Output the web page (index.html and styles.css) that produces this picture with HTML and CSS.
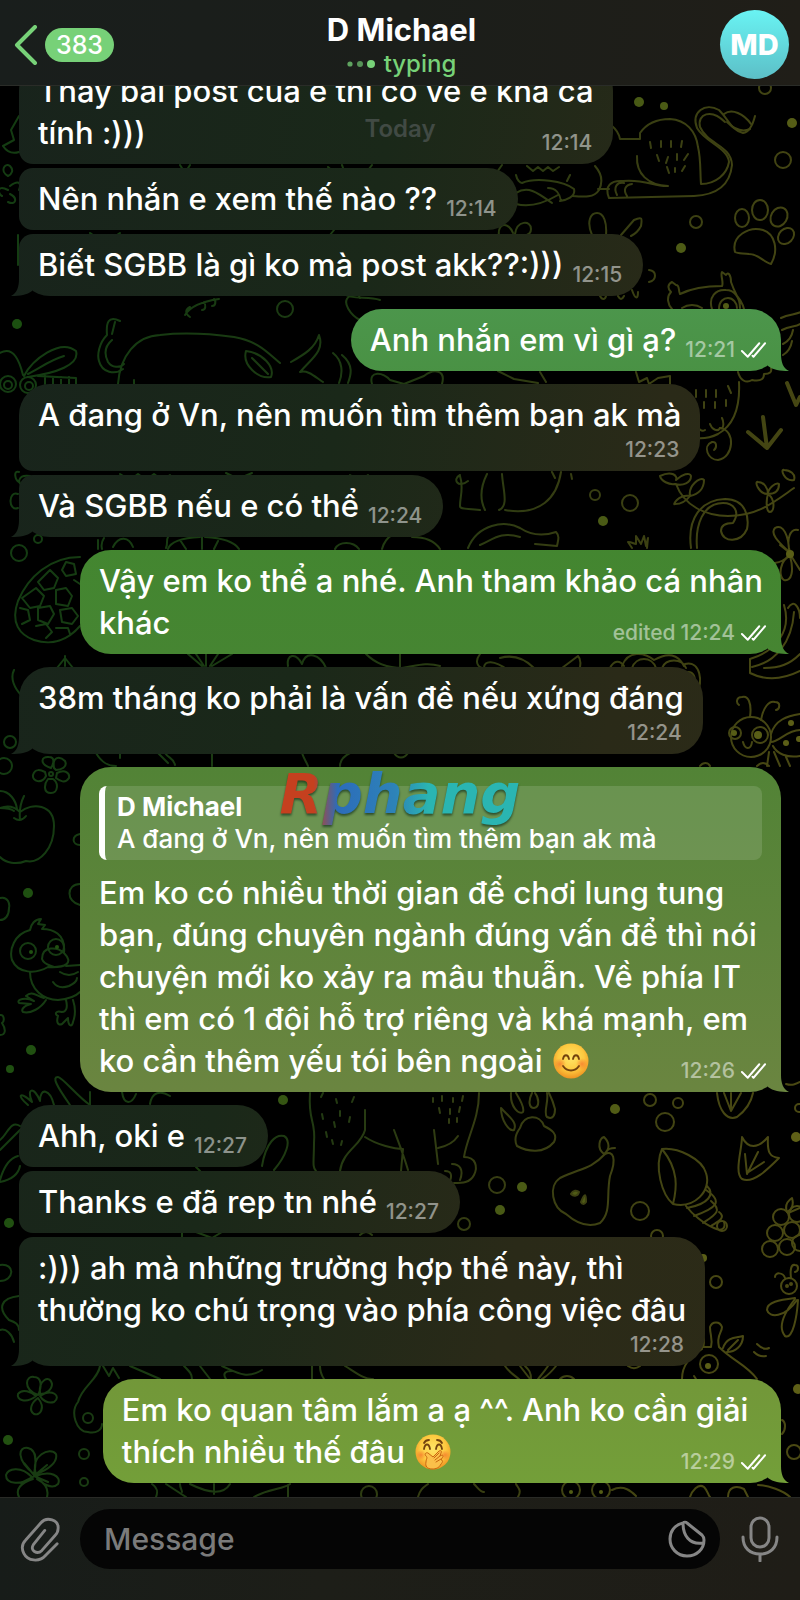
FILE: index.html
```html
<!DOCTYPE html>
<html lang="vi">
<head>
<meta charset="utf-8">
<meta name="viewport" content="width=device-width, initial-scale=1">
<title>D Michael</title>
<link rel="stylesheet" href="styles.css">
</head>
<body>
<svg class="defs" aria-hidden="true">
  <symbol id="checks" viewBox="0 0 28 18">
    <path d="M2 10l6 6L20 2M13 15l1 1L26 2" fill="none" stroke="currentColor" stroke-width="2" stroke-linecap="round" stroke-linejoin="round"/>
  </symbol>
</svg>

<header class="topbar">
  <button class="back" type="button" aria-label="Back">
    <svg class="back-arrow" viewBox="0 0 24 40" aria-hidden="true"><path d="M21 2L3 20l18 18" fill="none" stroke="currentColor" stroke-width="4" stroke-linecap="round" stroke-linejoin="round"/></svg>
    <span class="unread">383</span>
  </button>
  <div class="peer">
    <h1 class="peer-name">D Michael</h1>
    <p class="peer-status">
      <svg class="dots" viewBox="0 0 28 10" aria-hidden="true"><circle cx="3" cy="5" r="2.6" opacity=".75"/><circle cx="13" cy="5" r="3" opacity=".65"/><circle cx="24" cy="5" r="4"/></svg>
      typing
    </p>
  </div>
  <button class="avatar" type="button" aria-label="Profile">MD</button>
</header>

<main class="chat">
  <svg class="pattern" viewBox="0 86 800 1411" preserveAspectRatio="xMidYMid slice" aria-hidden="true">
    <defs>
      <linearGradient id="ink" gradientUnits="userSpaceOnUse" x1="0" y1="800" x2="800" y2="900">
        <stop offset="0" stop-color="#143c12"/><stop offset=".4" stop-color="#1e3a12"/><stop offset=".65" stop-color="#363d12"/><stop offset="1" stop-color="#4a4913"/>
      </linearGradient>
      <linearGradient id="dot" gradientUnits="userSpaceOnUse" x1="0" y1="800" x2="800" y2="900">
        <stop offset="0" stop-color="#1b4f10"/><stop offset="1" stop-color="#5e5f17"/>
      </linearGradient>
    </defs>
    <g class="ink">
      <!-- lion -->
      <path d="M612 126c5 4 7 8 8 13h20v-6c7-10 18-14 30-14 16 1 26 12 28 28 3 12 2 25 3 37 15 0 26-10 28-22-1-14-24-20-32-34-6-16 8-26 22-18 10 10 12 20 24 23 7-1 10-9 12-17"/>
      <path d="M725 122c-14-14-28-8-25 5 8 18 31 18 32 38-2 20-16 30-38 31l-85 2c-5-12 2-18 14-17 22-2 32 6 45 5-20-1-32-12-31-30M617 195c-4-8 0-13 7-12M627 196c-4-6-2-11 5-12M724 114c8-6 20 0 27 10M727 122c8 8 16 10 23 7"/>
      <path d="M650 142l1 6M661 141v6M671 141v6M682 141l-1 6M657 155l2 6M668 157l-2 6M677 154v6M688 154l-4 6M667 167l2 6M675 168v4M685 166l-3 5M595 166c8 9 7 18 4 24-5 8-15 7-27 6M598 189h11M497 172l5-7M516 175c1 5 4 8 6 8 14-6 42-2 52 6 2 8-8 11-14 12M516 193c12-8 22 0 36 10M516 204c14 4 30-2 42-9M548 188c8 0 12 6 13 13M527 166l6 5 5-4 5 4 5-4 5 4 6-4M570 175l-3 6"/>
      <!-- small paw, ears and sprout behind the second and third bubbles -->
      <path d="M592 235c-6-14-1-22 5-22 7 0 10 10 9 22M621 235l13-15c9-4 8-1 7 6-3 6-6 8-10 10M499 236c-2-14 10-14 14-3M515 234c2-14 16-14 16-5 0 4-2 5-6 7M649 270c8 1 8 10 0 12M600 296c2 4 5 4 6 0M618 296c2 4 4 4 6 0M632 290c3 9 6 10 6 2"/>
      <path d="M342 165c3 14 20 16 30 0M180 165l5 8 5-8M328 167l9 8M330 235l4-5M18 235v30M90 233c6 6 22 6 30 0M360 298c-4-6 2-12 8-9"/>
      <!-- paw print -->
      <ellipse cx="742" cy="218" rx="7" ry="9"/><ellipse cx="760" cy="210" rx="8" ry="10"/><ellipse cx="779" cy="217" rx="8" ry="10" transform="rotate(30 779 217)"/><ellipse cx="786" cy="236" rx="7" ry="9" transform="rotate(45 786 236)"/>
      <path d="M735 252c-4-16 14-26 28-22 12 4 16 20 8 34-8-2-12-10-22-10-6-1-11 0-14-2z"/>
      <circle cx="783" cy="160" r="8"/><circle cx="696" cy="222" r="6"/><circle cx="765" cy="88" r="6"/>
      <!-- owl -->
      <path d="M672 309c-4-4-6-12-1-17-4-4-3-8 1-10l4 3c4 0 2 5 4 9 14-7 28-8 42-8 2-4-2-11 0-14l4 3c2-4 5 0 5 7 2 6 4 10 6 14 6 7 7 12 8 18M682 308c6-4 14-4 20 0M712 309c-4-12 4-20 14-19 8 0 14 7 14 18M719 309c0-8 5-11 9-11 5 0 9 5 9 10M781 318c8-4 14-3 20-6M782 330c8-4 14-3 18-6M783 344c6-3 9-8 10-14M783 355c5-3 8-8 9-14"/>
      <path d="M636 372l3 10 8-4 2 6 9-6 12-2v10c-2 18 0 30 4 40 10 14 30 15 44 8 18-10 22-32 21-52M738 372c2 8 8 12 14 8 10 2 12-2 12-6 6 0 8-2 7-6M696 390v7M706 390v7M716 390v7M728 386l3 7M693 402l1 6M704 402v6M715 402v6M726 400v6M696 422c2 8 6 10 9 8M710 424c2 6 8 8 10 4 4 2 4-6 2-10"/>
      <path d="M720 428c16 2 14 30-2 32-10 0-16-14-6-18 5-1 5 6 2 8"/>
      <!-- bird tracks -->
      <path class="bold" d="M763 417l4 31M748 432l19 16 14-18M787 383l9 22 4-8"/>
      <!-- vine -->
      <path d="M660 476c12-6 18 0 16 4 6-6 14-8 15-4 0 7-8 10-16 8-6 1-14-3-15-8zM676 484c8 22 30 32 52 32 30 0 46-14 66-28M690 496c-12-2-18 10-15 8 8 0 12-4 15-8zM690 496c-2-10 10-20 14-16 0 8-5 14-14 16zM768 494c-10 0-14-14-10-12 6 0 10 6 10 12zM768 494c8 6 6 18 2 18s-4-12-2-18zM768 494c0-6 8-12 11-10 0 8-5 10-11 10zM794 480c-10 2-14-12-10-10 6 0 12 4 10 10z"/>
      <path d="M691 548c-4-30 10-48 34-49 22 0 24 20 22 30-6 14-24 14-26 2 0-7 8-8 12-8 8-12 0-20-10-20-20 0-28 22-26 45"/>
      <!-- flower on the right edge -->
      <path d="M789 552c-8-8-20-18-14-24 8-5 14 8 14 24zM790 552c-4-12 0-24 8-22M789 555c-8 10-22 10-24 4M790 556c-10 4-12 20-6 24 8 2 10-10 6-24zM790 554l10 16M780 545l10 8"/>
      <circle cx="595" cy="495" r="5"/><circle cx="630" cy="503" r="8"/>
      <!-- penguin, fish and fern -->
      <path d="M480 510c-12-2-20 0-20-4 0-10 4-18 0-30M485 510c-6-12-4-24 2-36M499 510c10-4 4-20 3-36M505 510c35 6 52-12 56-38M552 472l3 6M571 474l1 5M460 475c-8 4-2 14 8 6M468 548c10-24 36-28 52-20 12 8 24 8 36 4 4 4 2 9 1 14l-22-2M480 545c14-6 20-14 40-8M632 548l-4-6c4 0 6 2 8 2v-8l5 8 3-8 2 10 2-8-1 10"/>
      <path d="M380 300c-12-4-28 0-36-6M350 296c-10 6 2 20 10 24M372 384c-4-14 12-12 18-4l14 4 20-8c10-8 22-6 18 8M498 371l16 8 24 4M540 372l6 10"/>
      <path d="M185 315c6-10 20-14 34-16M190 317c-6-4-4-8 0-10M202 310c4 0 4-5 2-8M212 306c4 0 4-5 2-7"/>
      <circle cx="285" cy="309" r="8"/>
      <!-- bull -->
      <path d="M118 384c2-28 18-48 42-49 26-3 52-1 74 2 24 4 34 16 46 26M120 321c-12-6-14 2-13 14-8 8-10 20-8 26 3 12 16 14 24 8M112 340c-7 6-8 14-4 22 4 6 12 6 16 2M115 322l-3 12M246 351c-4 14 12 28 25 26 4-10-8-24-25-26zM252 358l16 16M291 362c14-8 24-14 28-27 6 16-8 24-18 36M300 372c8-2 14 4 23 10M333 353c10 8 10 20 6 30M342 355c12 10 9 20 6 28M134 380v5"/>
      <!-- dragonfly -->
      <path d="M0 353c14-8 20 10 23 22M24 376c8-16 36-38 52-25 4 14-20 22-48 26M28 374c12-6 22-14 36-18"/>
      <circle cx="8" cy="384" r="8"/><circle cx="28" cy="385" r="8"/><circle cx="8" cy="385" r="4"/><circle cx="29" cy="386" r="4"/>
      <path d="M38 376l38 2v8M45 376v8M53 377v8M61 377v8M69 377v8"/>
      <!-- leaf and flower at the top left -->
      <path d="M19 116l-8 14 3 10-11 6c4 6 10 8 16 6M8 176c-8-4-4-14 2-10 4 4 2 8-2 10zM10 186c8-6 12-4 9 4M8 190c-12-6-10 4-6 6M10 194c8 4 6 12-2 8"/>
      <path d="M19 472c-6-2-4 8 0 10M30 476c-12-2-14 8-6 10M18 494c-10-4-10 18 0 14M120 474l10 6 8-6 8 6 8-6 8 6 8-5M226 473l12 6 14-6M350 475l10 6 8-6"/>
      <path d="M98 540v9M104 538c-4 6-2 10-2 11M113 547c6-12 16-10 20 0M166 548c2-4 0-8 2-11M200 537c-20 1-30 6-32 12M202 537v12M205 537c20 1 30 6 34 12M180 540l6 9M218 541l-4 8M335 549c4-8 18-8 24 0M382 549c4-14 16-20 26-14M412 537c16 0 24 6 28 12"/>
      <circle cx="19" cy="553" r="8"/><circle cx="38" cy="539" r="4"/>
      <!-- pineapple -->
      <path d="M80 557c-30 0-52 20-62 44-8 22 2 34 16 39 18 6 34 0 46-14M50 570l8 8-4 10-10 2-6-8zM66 562l8 2 2 10-10 2-4-6zM36 588l8 8-4 10-10 2-8-10zM56 590l10-2 6 8-4 10-12-2zM74 580l6 4M20 608l8 2 2 10-8 4M38 608l12-2 4 8-6 10-10-4zM60 610l12-2 6 8-6 8-10-2zM36 626l10-2 6 8-6 6M56 628l12 0 2 6"/>
      <!-- sprigs between the long bubbles -->
      <path d="M65 656v10M57 668l8-10 8 10M22 696c-8-8-12-18-8-26M188 654l14 12M196 654l8 12M206 654v12M218 654l-8 12M232 654l-20 12M288 666c-2-12 8-14 14-2 4-14 18-10 24 4M366 654c10 10 22 14 36 14 14-2 24-6 38-2M400 654v14M480 654c-6 8-2 14 4 14 0-8 10-8 24 2M500 658c14-4 26 2 34 10M562 668l16-12c4 4 2 8 2 12"/>
      <path d="M610 668c4-8 10-8 14-2M622 666c6-16 22-14 32-6 14-8 24-6 30 6M632 668c4-12 20-12 24 0M662 668c4-10 20-10 24 0M685 664c16-4 18 20 12 28M688 672c6 0 8 6 6 12"/>
      <path d="M788 608c6-10 12 0 12 10M784 605c8 26-8 46-34 54v14c16 8 34 6 50-2M794 612c-2 30-18 50-42 55M764 668c16 0 26-4 36-14"/>
      <!-- ladybird -->
      <circle cx="751" cy="737" r="20"/><circle cx="760" cy="735" r="8"/><circle cx="735" cy="733" r="6"/>
      <path d="M743 742c2 8 8 8 9 0M750 717c2-14-2-22-8-20-6 0-6 6-3 8M761 720c2-12 8-20 14-18 6 0 5 7 1 8M771 734c4-14 16-18 29-20M771 742c8 0 16-12 29-12M773 746c4 8 14 12 27 10M769 752l-2 14M774 752l6 14M786 757l4 9M757 766c4-4 8-4 12 0"/>
      <!-- bits above the quoted reply -->
      <path d="M96 753c6 10 12 13 20 13M120 752v6M158 753l10 10M165 753c4 6 8 4 10 12M212 753v13M302 753c2 6 4 8 6 13M340 766c0-6 4-10 10-13M394 753c4 6 10 6 14 0M700 766c3-4 8-4 10 0"/>
      <!-- left column: flower, apple, duck -->
      <circle cx="10" cy="742" r="6"/><circle cx="4" cy="766" r="8"/><circle cx="51" cy="774" r="2"/>
      <path d="M51 768c-12-4-10-12-2-11 6 0 5 6 2 11zM54 768c-2-12 6-12 11-7 3 6-4 9-9 9zM57 773c8-4 13 0 12 5-4 6-9 3-13 0zM53 779c6 4 5 14-2 14-8 0-7-9-3-14zM46 776c-4 8-14 6-13-1 2-7 8-5 12-3z"/>
      <path d="M0 808c10-4 16 0 20 4 12-10 34-8 34 14 0 22-14 38-28 35-10 4-20 2-26-4M14 818c4 3 8 3 12-2M20 820c-1-10 0-16 4-24M0 791c10 0 16 10 17 18M0 808c6 0 10 0 14 3"/>
      <path d="M80 834c-9 2-8 11 0 11M80 884c-14 0-14 18 0 21M0 898c8-2 10 6 9 10 0 8-4 12-9 12M0 1015c4-1 5 6 2 8 4 6 4 12-2 12"/>
      <path d="M30 930c-16 4-21 20-18 30 6 14 24 14 36 7 18 1 26-4 16-14 2-20-12-24-22-24l3-4-7-1 3-5c-6 0-10 5-11 11zM64 953c-6-6-22-8-22 6 2 6 8 6 12 8M30 972c0 18 14 28 28 28 12-1 18-4 22-8M66 966l14-1M53 982c4 6 10 6 16 4 4-2 8-4 8-8M60 972c6 4 12 4 18 0M44 998c-8-2-12-8-18-2l8 5c-8-4-18-2-15 2l12 1c-8 2-10 6-8 8 8 2 18-4 23-12M66 1000c2 8 0 12-4 12-6-2-8 2-4 4-2 6 0 10 4 8l6-6c0 8 4 10 5 4 3-8 2-16 0-22"/>
      <circle cx="28" cy="951" r="8"/><circle cx="56" cy="947" r="8"/>
      <!-- grass -->
      <path d="M28 1105c-12-10-8-14 4-3-6-14 2-16 8-1 0-14 10-12 14 4M70 1105c-14-20-18-28-12-28 4 0 20 20 32 28V1092M122 1092c2 14 10 12 14 2M150 1104c2-12 10-14 20-8"/>
      <!-- leaf by the short bubbles -->
      <path d="M0 1140c8-6 10-20 20-14M0 1180c4-14 10-22 18-24M0 1182c10-2 18-6 20-16M20 1130l-20 20M262 1166c4-24 14-32 22-30 8 4 2 20-10 34M196 1167l4 4M182 1232v6M196 1232l16 6 10-6M360 1235c4-4 8-4 12 0M0 1265c16-2 14 16 0 16M19 1296c-18 2-22 12-10 24 6 2 10 4 10 10M0 1330c6-2 12 4 14 12"/>
      <!-- bear legs -->
      <path d="M310 1093c-2 30 6 26 4 50 0 18-2 24 2 28M365 1110v20c-4 16-22 20-25 41M365 1137c12 8 30 12 38 12l-2 22M394 1130c6 16 10 26 14 40M479 1093c0 26-12 44-15 64M434 1130l4 34M438 1148c10-2 16-6 20-12M464 1157c12 0 14 10 10 18-4 8-12 8-20 8M452 1164c8 0 12 6 8 16M445 1171c6 0 8 4 4 12"/>
      <path d="M321 1097l2-4M336 1099l1 4M354 1097l-2 5M322 1114l1 5M340 1111v5M334 1122l1 5M350 1117l-1 5M326 1132l1 5M332 1140l1 4M342 1141l-1 4M433 1098v4M442 1096v5M453 1098v4M463 1096l-1 5M439 1108l1 5M450 1109v5M460 1107l-1 5M449 1119v4M457 1118v4"/>
      <!-- claw print -->
      <path d="M511 1093c-1 14 8 22 12 19 2-5-4-14-7-19M532 1093c-4 8-3 15 2 15 6-1 5-10 1-15M547 1093c2 8-4 20 0 24 6 3 8-2 8-8-2-8-4-12-6-16M501 1108c0 12 8 24 13 22 4-8-6-14-13-22zM520 1128c4-14 20-14 24-2 8 4 14 8 10 16-10 12-26 10-37 4-4-8 0-14 3-18z"/>
      <circle cx="650" cy="1100" r="6"/><circle cx="678" cy="1103" r="5"/><circle cx="665" cy="1122" r="9"/><circle cx="497" cy="1185" r="8"/><circle cx="640" cy="1211" r="9"/><circle cx="464" cy="1224" r="6"/><circle cx="657" cy="1236" r="6"/><circle cx="716" cy="1282" r="6"/><circle cx="799" cy="1108" r="4"/>
      <path d="M717 1093c2 18 10 28 20 24 8-6 14-14 16-24M724 1093l7 18 10-18M731 1093v18M786 1084c6 2 10 0 14-2"/>
      <!-- pear -->
      <path d="M605 1154c8-4 12 4 5 22-4 20 2 36-10 47-14 6-26-2-34-9-14-6-18-28-6-36 20-10 30-8 45-24zM604 1154c-8-6-4-16 0-17 6 6 6 12 0 17M606 1152c2-4 6-4 9-4"/>
      <path class="solid" d="M571 1194c2-4 6-4 8-2-1 4-5 5-8 2zM581 1202c4-10 5-8 5 0-2 3-4 2-5 0z"/>
      <!-- shell -->
      <path d="M662 1149c-8 18 0 46 11 55 4-16 6-34-11-55zM662 1149c16-2 40 10 44 24 6 18-12 36-33 31M707 1186c8 8 2 18-20 22M706 1190c18 12 10 18-12 26M711 1201c12 10 4 14-8 22M719 1212c8 6-2 10-8 14M724 1222c2 6-2 10-10 6-10-4-22-14-28-22"/><circle cx="722" cy="1226" r="5"/>
      <!-- leaf -->
      <path d="M742 1137c6 12 16 12 26 0-1 16 2 20 11 21-12 12-26 26-37 21-8-6 0-30 0-42zM745 1154l2 20 11-22M747 1173l17-11"/>
      <!-- grapes -->
      <circle cx="781" cy="1217" r="8"/><circle cx="797" cy="1214" r="8"/><circle cx="775" cy="1233" r="8"/><circle cx="792" cy="1230" r="8"/><circle cx="770" cy="1249" r="8"/><circle cx="787" cy="1247" r="8"/><circle cx="800" cy="1243" r="8"/>
      <path d="M787 1212c-3-8 2-12 5-14 2 6 0 12-5 14M788 1213l12-5"/>
      <!-- moth -->
      <circle cx="789" cy="1286" r="8"/><circle cx="787" cy="1286" r="1"/><circle cx="791" cy="1284" r="1"/>
      <path d="M785 1278c-2-6-10-6-10-1M791 1278c-1-8 0-14 4-13 4 0 4 6 0 7M795 1298c-16 2-28 4-28 12 2 8 18 8 30-10M795 1299c-14 18-16 30-10 37 8 4 12-20 13-36M757 1344c4 4 8 6 12 4M754 1352c4 4 8 5 12 4"/>
      <!-- giraffe -->
      <path d="M682 1379c0-14 8-22 20-30 0-10-6-12-3-24 4 0 6 20 4 22h8c2-8-1-12-1-20 2-6 10-6 12 0 0 6-6 8-3 20 14 14 28 18 38 32M723 1348c4-12 14-10 20-12 0 10-8 16-16 16M728 1350l10-10M694 1376l2 3"/><circle cx="709" cy="1364" r="9"/>
      <path d="M100 1366c-2 14-18 20-22 36-8 10-2 30 10 30 8 2 14-2 14-8M505 1366c4 6 10 10 14 13M525 1366c4 4 6 6 6 13M520 1366l10 13M548 1366c-4 6-6 8-10 13M556 1366c-8 10-10 10-14 13M560 1379c4-4 10-4 14 0M628 1366c4 3 8 3 12 0M184 1366c6 6 8 8 8 13M200 1366l10 13M222 1366c14 6 24 14 40 4M226 1379c-4-6 0-8 6-8M312 1366v13M320 1366c0 6 2 10 4 13M345 1366c10 6 20 14 28 13M103 1366l6 10 4-8 6 10M130 1366l30 13"/>
      <!-- flowers at the bottom left -->
      <path d="M38 1395c-16-6-12-20-4-18 8 0 8 10 4 18zM40 1394c-2-14 10-20 12-10 0 6-6 10-12 10zM40 1396c12-8 22 0 14 6-6 2-12-2-14-6zM38 1398c8 10 2 18-4 16-6-4-2-12 4-16zM36 1396c-10 8-20 4-18-2 4-6 14-2 18 2z"/>
      <path d="M34 1474c-18-14-16-28-6-26 10 2 8 16 6 26zM36 1474c-6-18 14-28 20-20 2 8-8 16-20 20zM36 1476c14-6 26 0 22 8-6 6-16 0-22-8zM32 1477c-12-12-24-8-26-2 0 10 16 10 26 2zM33 1479c-12 4-18 10-14 18M37 1479c8 4 12 10 10 18M34 1475l-10-12M35 1475l12-10M34 1476l14 6M33 1477l-12 6"/>
      <circle cx="84" cy="1454" r="5"/><circle cx="84" cy="1482" r="4"/>
      <circle cx="88" cy="1418" r="5"/>
      <path d="M152 1484c6 4 6 8 4 13M166 1484l20 13M180 1484c0 4 2 6 2 8M190 1484c20 10 34 10 40 0M214 1484v10M254 1497c14-8 30-8 36-13M288 1497v-12M418 1497c2-8 6-10 10-13M474 1484c4 4 6 8 10 8M516 1484c2 4 6 6 2 13M612 1490c12-6 20 2 24 6M690 1497c2-6 8-14 14-10 4 4 4 8 6 10M728 1497c0-10 8-12 16-8l4 8M758 1485c10 0 26 6 32 12"/>
      <circle cx="369" cy="1494" r="8"/><circle cx="571" cy="1490" r="9"/><circle cx="601" cy="1490" r="9"/>
      <circle cx="794" cy="1452" r="7"/><path d="M782 1420c4 2 4 10 0 14"/>
    </g>
    <g class="dot">
      <circle cx="639" cy="102" r="5"/><circle cx="664" cy="106" r="4"/><circle cx="792" cy="123" r="5"/><circle cx="681" cy="248" r="5"/><circle cx="17" cy="324" r="5"/><circle cx="603" cy="521" r="5"/><circle cx="28" cy="893" r="5"/><circle cx="31" cy="1050" r="5"/><circle cx="10" cy="1069" r="4"/><circle cx="283" cy="1100" r="5"/><circle cx="615" cy="1109" r="5"/><circle cx="522" cy="1187" r="5"/><circle cx="500" cy="1210" r="5"/><circle cx="703" cy="1258" r="4"/><circle cx="796" cy="1137" r="5"/><circle cx="9" cy="1223" r="5"/><circle cx="8" cy="1440" r="5"/><circle cx="798" cy="1389" r="5"/><circle cx="31" cy="952" r="2"/><circle cx="57" cy="947" r="2"/><circle cx="758" cy="735" r="4"/><circle cx="734" cy="733" r="3"/><circle cx="791" cy="723" r="3"/><circle cx="786" cy="743" r="3"/><circle cx="799" cy="739" r="3"/><circle cx="708" cy="1366" r="3"/><circle cx="571" cy="1492" r="2"/><circle cx="601" cy="1492" r="2"/><circle cx="790" cy="554" r="4"/><circle cx="726" cy="306" r="3"/>
    </g>
  </svg>

  <p class="date">Today</p>

  <article class="msg in more fit-s">
    <p class="text">Thấy bài post của e thì có vẻ e khá cá tính :)))</p>
    <span class="meta over"><time>12:14</time></span>
  </article>
  <article class="msg in row joined more">
    <p class="text">Nên nhắn e xem thế nào ??</p>
    <span class="meta"><time>12:14</time></span>
  </article>
  <article class="msg in row joined tail">
    <p class="text">Biết SGBB là gì ko mà post akk??:)))</p>
    <span class="meta"><time>12:15</time></span>
  </article>
  <article class="msg out row tail">
    <p class="text">Anh nhắn em vì gì ạ?</p>
    <span class="meta"><time>12:21</time><svg class="checks"><use href="#checks"/></svg></span>
  </article>
  <article class="msg in more">
    <p class="text">A đang ở Vn, nên muốn tìm thêm bạn ak mà</p>
    <span class="meta"><time>12:23</time></span>
  </article>
  <article class="msg in row joined tail">
    <p class="text">Và SGBB nếu e có thể</p>
    <span class="meta"><time>12:24</time></span>
  </article>
  <article class="msg out tail">
    <p class="text">Vậy em ko thể a nhé. Anh tham khảo cá nhân khác</p>
    <span class="meta over">edited <time>12:24</time><svg class="checks"><use href="#checks"/></svg></span>
  </article>
  <article class="msg in tail">
    <p class="text">38m tháng ko phải là vấn đề nếu xứng đáng</p>
    <span class="meta"><time>12:24</time></span>
  </article>
  <article class="msg out tail">
    <blockquote class="reply">
      <strong class="reply-name">D Michael</strong>
      <span class="reply-text">A đang ở Vn, nên muốn tìm thêm bạn ak mà</span>
    </blockquote>
    <p class="text">Em ko có nhiều thời gian để chơi lung tung bạn, đúng chuyên ngành đúng vấn để thì nói chuyện mới ko xảy ra mâu thuẫn. Về phía IT thì em có 1 đội hỗ trợ riêng và khá mạnh, em ko cần thêm yếu tói bên ngoài
      <svg class="emoji" viewBox="0 0 36 36" role="img" aria-label="😊">
        <defs>
          <radialGradient id="face" cx=".5" cy=".4" r=".62"><stop offset="0" stop-color="#ffe566"/><stop offset=".6" stop-color="#fdc93f"/><stop offset="1" stop-color="#ee8f1f"/></radialGradient>
          <radialGradient id="cheek"><stop offset="0" stop-color="#f4702c" stop-opacity=".7"/><stop offset="1" stop-color="#f4702c" stop-opacity="0"/></radialGradient>
        </defs>
        <circle cx="18" cy="18" r="17.500" fill="url(#face)"/>
        <circle cx="7" cy="21" r="6" fill="url(#cheek)"/><circle cx="29" cy="21" r="6" fill="url(#cheek)"/>
        <path d="M10 16c1-5 5-5 6 0M20 16c1-5 5-5 6 0M10 23c4 6 12 6 16 0" fill="none" stroke="#73420e" stroke-width="1.800" stroke-linecap="round"/>
      </svg></p>
    <span class="meta over"><time>12:26</time><svg class="checks"><use href="#checks"/></svg></span>
  </article>
  <article class="msg in row more">
    <p class="text">Ahh, oki e</p>
    <span class="meta"><time>12:27</time></span>
  </article>
  <article class="msg in row joined more">
    <p class="text">Thanks e đã rep tn nhé</p>
    <span class="meta"><time>12:27</time></span>
  </article>
  <article class="msg in joined tail">
    <p class="text">:))) ah mà những trường hợp thế này, thì<br>thường ko chú trọng vào phía công việc đâu</p>
    <span class="meta"><time>12:28</time></span>
  </article>
  <article class="msg out tail fit-m">
    <p class="text">Em ko quan tâm lắm a ạ ^^. Anh ko cần giải thích nhiều thế đâu
      <svg class="emoji" viewBox="0 0 36 36" role="img" aria-label="🤭">
        <circle cx="18" cy="18" r="17.500" fill="url(#face)"/>
        <circle cx="6" cy="21" r="5" fill="url(#cheek)"/><circle cx="30" cy="21" r="5" fill="url(#cheek)"/>
        <path d="M9 15c1-6 5-6 6 0M21 15c1-6 5-6 6 0M9 9c1-2 3-3 5-3M22 6c2 0 4 1 5 3" fill="none" stroke="#73420e" stroke-width="1.800" stroke-linecap="round"/>
        <path d="M11 22c-2-2 0-4 2-3l5 4 6-6c2-1 3 0 2 2l-1 3c3-2 4 0 2 2l-1 2c2 0 2 2 0 4-2 4-5 5-9 5-5 0-7-3-6-7 0-3 2-4 0-6z" fill="#fbc04a" stroke="#c9660f" stroke-width="1"/>
        <path d="M19 24l5-5M20 26l5-4M21 28l5-3" stroke="#c9660f" stroke-width="1" stroke-linecap="round"/>
      </svg></p>
    <span class="meta over"><time>12:29</time><svg class="checks"><use href="#checks"/></svg></span>
  </article>
</main>

<footer class="composer">
  <button class="tool" type="button" aria-label="Attach">
    <svg viewBox="0 0 42 46" aria-hidden="true"><path d="M39 28L27 40C20 48 8 46 4 38 1 32 3 27 6 24L22 6C28-1 41 3 40 12c0 3-1 5-3 7L23 35c-5 5-13 0-9-6l12-15"/></svg>
  </button>
  <div class="field">
    <input class="input" type="text" placeholder="Message" aria-label="Message">
    <button class="sticker" type="button" aria-label="Stickers">
      <svg viewBox="0 0 38 38" aria-hidden="true"><path d="M15 3C6 5 2 12 2 19c0 9 7 17 17 17s17-7 17-16c0-2-1-4-2-5L19 3c-1-1-3-1-4 0zM15 3c0 12 6 22 20 20"/></svg>
    </button>
  </div>
  <button class="tool" type="button" aria-label="Voice message">
    <svg viewBox="0 0 38 46" aria-hidden="true"><rect x="10" y="2" width="18" height="29" rx="9"/><path d="M2 21c0 11 7 17 17 17s17-6 17-17M19 38v7"/></svg>
  </button>
</footer>

<div class="watermark"><span class="watermark-text">Rphang</span></div>
</body>
</html>
```
FILE: styles.css
```css
* { box-sizing: border-box; }

body {
  position: relative;
  display: flex;
  flex-direction: column;
  height: 100vh;
  margin: 0;
  background: #000;
  color: #fff;
  font-family: Inter, "Noto Sans", "Liberation Sans", sans-serif;
  font-weight: 500;
}

h1, p, blockquote { margin: 0; }

button {
  padding: 0;
  border: 0;
  background: none;
  color: inherit;
  font: inherit;
}

.defs { position: absolute; width: 0; height: 0; }

/* Header */
.topbar {
  display: grid;
  grid-template-columns: 1fr auto 1fr;
  align-items: center;
  height: 86px;
  padding: 4px 11px 0 14px;
  border-bottom: 1px solid #2a2c28;
  background: linear-gradient(to right, #191e1c, #1b1e1a 50%, #201e18);
}

.back {
  display: flex;
  align-items: center;
  justify-self: start;
  gap: 7px;
  color: #77d278;
}

.back-arrow { width: 24px; height: 40px; }

.unread {
  min-width: 69px;
  border-radius: 17px;
  background: #77d178;
  color: #fff;
  font-size: 25px;
  line-height: 34px;
  text-align: center;
}

.peer { text-align: center; }

.peer-name {
  font-size: 31px;
  font-weight: 700;
  line-height: 38px;
}

.peer-status {
  display: flex;
  align-items: center;
  justify-content: center;
  gap: 9px;
  color: #77d278;
  font-size: 24px;
  line-height: 30px;
}

.dots { width: 28px; height: 10px; fill: currentColor; }

.avatar {
  justify-self: end;
  width: 69px;
  height: 69px;
  border-radius: 50%;
  background: linear-gradient(#69f3f3, #5cbfc7);
  font-size: 29px;
  font-weight: 800;
}

/* Conversation, anchored to its newest message */
.chat {
  position: relative;
  display: flex;
  flex: 1;
  flex-direction: column;
  justify-content: flex-end;
  min-height: 0;
  padding: 0 19px 14px;
  overflow: hidden;
}

.pattern {
  position: absolute;
  inset: 0;
  width: 100%;
  height: 100%;
}

.ink {
  fill: none;
  stroke: url(#ink);
  stroke-width: 2;
  stroke-linecap: round;
  stroke-linejoin: round;
}

.bold { stroke-width: 4; }
.solid, .dot { fill: url(#dot); }

.date {
  position: absolute;
  top: 28px;
  left: 0;
  right: 0;
  z-index: 1;
  color: #414a44;
  font-size: 24px;
  font-weight: 600;
  line-height: 30px;
  text-align: center;
}

.msg {
  position: relative;
  display: flex;
  flex: none;
  flex-direction: column;
  max-width: 92%;
  margin-top: 13px;
  padding: 10px 19px;
  border-radius: 31px;
  background-attachment: fixed;
}

.msg.row { flex-direction: row; gap: 9px; }

.in {
  align-self: flex-start;
  background-image: linear-gradient(100deg, #18231c, #1a2819 38%, #2a2a18 68%, #2d2b17);
}

.out {
  align-self: flex-end;
  background-image: linear-gradient(#4c964c 19%, #438630 34%, #468532 41%, #528336 48%, #6a8540 68%, #729739 86%, #739f39 93%);
}

.joined { margin-top: 4px; border-top-left-radius: 14px; }
.more { border-bottom-left-radius: 14px; }
.fit-s { max-width: 78%; }
.fit-m { max-width: 89%; }

.tail::after {
  content: "";
  position: absolute;
  bottom: 0;
  width: 24px;
  height: 31px;
  background: inherit;
  background-attachment: fixed;
}

.in.tail::after {
  left: -8px;
  clip-path: path("M8 0V14C8 22 6 28 0 31C9 31 16 30 21 26L21 0Z");
}

.out.tail::after {
  right: -8px;
  clip-path: path("M16 0V14C16 22 18 28 24 31C15 31 8 30 3 26L3 0Z");
}

.text {
  position: relative;
  z-index: 1;
  font-size: 31px;
  line-height: 42px;
}

.out:not(.row) .text { margin-right: -8px; }

.emoji {
  width: 36px;
  height: 36px;
  margin-left: 2px;
  vertical-align: -7px;
}

.meta {
  z-index: 1;
  display: flex;
  align-self: flex-end;
  align-items: center;
  gap: 5px;
  margin-top: 3px;
  margin-right: 2px;
  color: rgba(255, 255, 255, 0.5);
  font-size: 21px;
  line-height: 22px;
}

.meta.over { margin-top: -22px; }
.out .meta { margin-right: -5px; }
.checks { width: 27px; height: 18px; color: #fff; }

.reply {
  display: flex;
  flex-direction: column;
  justify-content: center;
  height: 74px;
  margin: 9px 0 12px;
  padding: 0 12px;
  border-left: 6px solid #fff;
  border-radius: 8px;
  background: rgba(255, 255, 255, 0.13);
  font-size: 26px;
  line-height: 32px;
}

.reply-name { font-weight: 700; }

/* Composer */
.composer {
  display: flex;
  align-items: flex-start;
  gap: 20px;
  height: 103px;
  padding: 11px 20px 0;
  border-top: 1px solid #292a26;
  background: linear-gradient(to right, #171c19, #1d1e18 40%, #1f1d17);
  color: #868686;
}

.composer svg {
  display: block;
  fill: none;
  stroke: currentColor;
  stroke-width: 3;
  stroke-linecap: round;
  stroke-linejoin: round;
}

.tool { display: flex; align-items: center; height: 60px; }
.tool svg { width: 40px; height: 46px; }

.field {
  display: flex;
  flex: 1;
  align-items: center;
  min-width: 0;
  height: 60px;
  padding: 0 14px 0 24px;
  border-radius: 30px;
  background: #050505;
}

.input {
  flex: 1;
  min-width: 0;
  height: 42px;
  padding: 0;
  border: 0;
  outline: 0;
  background: none;
  color: #fff;
  font: inherit;
  font-size: 30px;
}

.input::placeholder { color: #7b7b7b; opacity: 1; }
.sticker svg { width: 38px; height: 38px; }

/* Site mark laid over the middle of the page */
.watermark {
  position: absolute;
  inset: 0;
  z-index: 2;
  display: grid;
  place-items: center;
  padding-bottom: 14px;
  pointer-events: none;
}

.watermark-text {
  background: linear-gradient(to right, #c5401f 14%, #2c6cba 24%, #2d83b8 48%, #2ab5b2 62%);
  background-clip: text;
  -webkit-background-clip: text;
  color: transparent;
  filter: drop-shadow(0 2px 1px rgba(20, 50, 30, 0.7));
  font-family: "DejaVu Sans", sans-serif;
  font-size: 56px;
  font-style: italic;
  font-weight: 700;
}
```
